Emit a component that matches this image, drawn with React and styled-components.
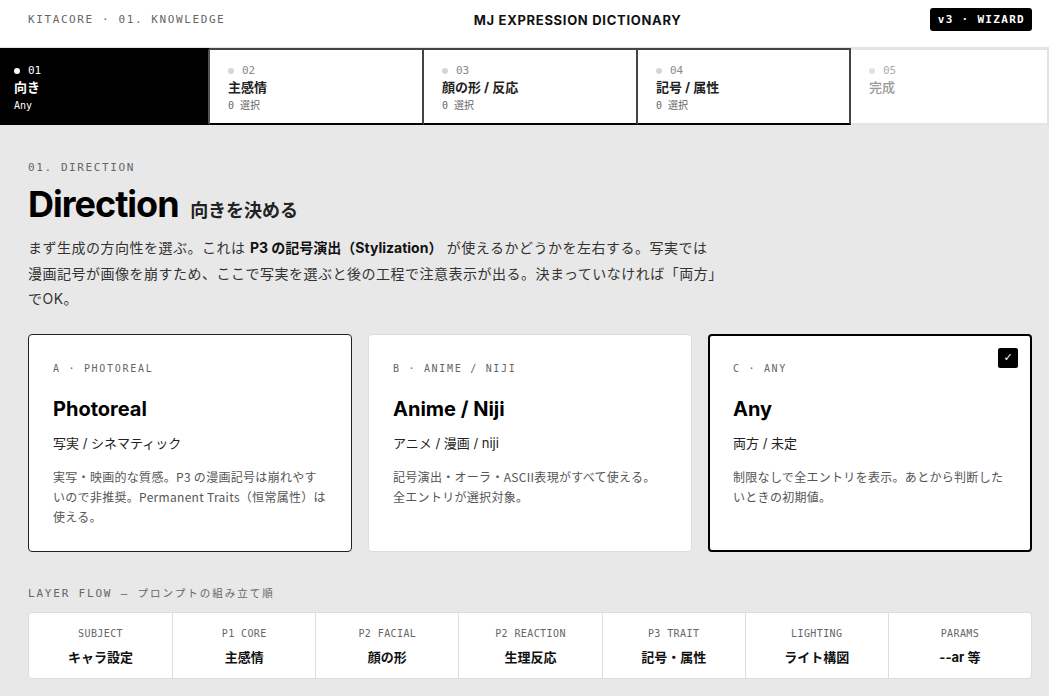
import styled, { createGlobalStyle } from "styled-components";

const GlobalStyle = createGlobalStyle`
  * { box-sizing: border-box; margin: 0; padding: 0; }
  body {
    background: #e8e8e8;
    font-family: Inter, "Noto Sans CJK JP", sans-serif;
    color: #111;
  }
`;

const MONO = `"DejaVu Sans Mono", "Noto Sans CJK JP", monospace`;
const TEXT = `"Noto Sans CJK JP", "Noto Sans", sans-serif`;

const steps = [
  { no: "01", title: "向き", sub: "Any", state: "active" },
  { no: "02", title: "主感情", sub: "0 選択", state: "open" },
  { no: "03", title: "顔の形 / 反応", sub: "0 選択", state: "open" },
  { no: "04", title: "記号 / 属性", sub: "0 選択", state: "open" },
  { no: "05", title: "完成", sub: "", state: "locked" },
];

const options = [
  {
    tag: "A · PHOTOREAL",
    name: "Photoreal",
    ja: "写実 / シネマティック",
    desc: "実写・映画的な質感。P3 の漫画記号は崩れやすいので非推奨。Permanent Traits（恒常属性）は使える。",
  },
  {
    tag: "B · ANIME / NIJI",
    name: "Anime / Niji",
    ja: "アニメ / 漫画 / niji",
    desc: "記号演出・オーラ・ASCII表現がすべて使える。全エントリが選択対象。",
  },
  {
    tag: "C · ANY",
    name: "Any",
    ja: "両方 / 未定",
    desc: "制限なしで全エントリを表示。あとから判断したいときの初期値。",
    selected: true,
  },
];

const layers = [
  ["SUBJECT", "キャラ設定"],
  ["P1 CORE", "主感情"],
  ["P2 FACIAL", "顔の形"],
  ["P2 REACTION", "生理反応"],
  ["P3 TRAIT", "記号・属性"],
  ["LIGHTING", "ライト構図"],
  ["PARAMS", "--ar 等"],
];

export default function App() {
  return (
    <>
      <GlobalStyle />
      <TopBar>
        <Crumb>KITACORE · 01. KNOWLEDGE</Crumb>
        <Brand>MJ EXPRESSION DICTIONARY</Brand>
        <Badge>v3 · WIZARD</Badge>
      </TopBar>

      <Steps>
        {steps.map((s) => (
          <Step key={s.no} $state={s.state}>
            <StepNo $state={s.state}>
              <Dot $state={s.state} />
              {s.no}
            </StepNo>
            <StepTitle $state={s.state}>{s.title}</StepTitle>
            {s.sub && <StepSub $state={s.state}>{s.sub}</StepSub>}
          </Step>
        ))}
      </Steps>

      <Main>
        <Eyebrow>01. DIRECTION</Eyebrow>
        <Heading>
          Direction <small>向きを決める</small>
        </Heading>
        <Lead>
          まず生成の方向性を選ぶ。これは <b>P3 の記号演出（Stylization）</b>{" "}
          が使えるかどうかを左右する。写実では漫画記号が画像を崩すため、ここで写実を選ぶと後の工程で注意表示が出る。決まっていなければ「両方」でOK。
        </Lead>

        <Cards>
          {options.map((o) => (
            <Card key={o.name} $selected={o.selected}>
              {o.selected && <Check>✓</Check>}
              <CardTag>{o.tag}</CardTag>
              <CardName>{o.name}</CardName>
              <CardJa>{o.ja}</CardJa>
              <CardDesc>{o.desc}</CardDesc>
            </Card>
          ))}
        </Cards>

        <FlowLabel>
          LAYER FLOW — <em>プロンプトの組み立て順</em>
        </FlowLabel>
        <Flow>
          {layers.map(([k, v]) => (
            <FlowCell key={k}>
              <span>{k}</span>
              <strong>{v}</strong>
            </FlowCell>
          ))}
        </Flow>
      </Main>
    </>
  );
}

const TopBar = styled.header`
  height: 48px;
  background: #fff;
  border-bottom: 1px solid #e2e2e2;
  display: flex;
  align-items: center;
  justify-content: space-between;
  padding: 0 17px 0 28px;
`;

const Crumb = styled.div`
  font-family: ${MONO};
  font-size: 11px;
  letter-spacing: 1.6px;
  color: #666;
  padding-bottom: 8px;
`;

const Brand = styled.div`
  font-size: 13px;
  font-weight: 700;
  letter-spacing: 0.7px;
  padding-bottom: 8px;
`;

const Badge = styled.div`
  background: #000;
  color: #fff;
  font-family: ${MONO};
  font-weight: 700;
  font-size: 11px;
  letter-spacing: 1.3px;
  padding: 5px 7px 5px 8px;
  border-radius: 3px;
  margin-bottom: 8px;
`;

const Steps = styled.nav`
  display: grid;
  grid-template-columns: 210px 214px 214px 213px 1fr;
  background: #fff;
`;

const Step = styled.div`
  height: 77px;
  padding: 14px 12px 14px 18px;
  border: 2px solid ${(p) => (p.$state === "locked" ? "#e4e4e4" : "#444")};
  border-bottom-color: ${(p) => (p.$state === "locked" ? "#e4e4e4" : "#000")};
  background: ${(p) => (p.$state === "active" ? "#000" : "#fff")};
  border-color: ${(p) => p.$state === "active" && "#000"};
  border-right-color: ${(p) => p.$state === "active" && "#555"};
  color: ${(p) => (p.$state === "active" ? "#fff" : "#222")};
  &:first-child { padding-left: 12px; }
  & + & { border-left: none; }
`;

const StepNo = styled.div`
  display: flex;
  align-items: center;
  gap: 8px;
  font-family: ${MONO};
  font-size: 11px;
  line-height: 14px;
  color: ${(p) => (p.$state === "active" ? "#fff" : "#888")};
  opacity: ${(p) => (p.$state === "locked" ? 0.7 : 1)};
`;

const Dot = styled.i`
  width: 6px;
  height: 6px;
  border-radius: 50%;
  background: ${(p) => (p.$state === "active" ? "#fff" : "#d6d6d6")};
`;

const StepTitle = styled.div`
  margin-top: 0;
  font-size: 13px;
  line-height: 18px;
  font-weight: ${(p) => (p.$state === "locked" ? 500 : 700)};
  color: ${(p) => (p.$state === "locked" ? "#999" : "inherit")};
`;

const StepSub = styled.div`
  margin-top: 3px;
  font-family: ${MONO};
  font-size: 10px;
  line-height: 14px;
  color: ${(p) => (p.$state === "active" ? "#fff" : "#666")};
`;

const Main = styled.main`
  padding: 36px 17px 0 28px;
`;

const Eyebrow = styled.div`
  font-family: ${MONO};
  font-size: 11px;
  letter-spacing: 1.6px;
  color: #666;
`;

const Heading = styled.h1`
  margin-top: 8px;
  font-size: 36px;
  line-height: 44px;
  font-weight: 700;
  letter-spacing: -1px;
  color: #000;
  small {
    font-size: 18px;
    font-weight: 700;
    letter-spacing: 0;
    margin-left: 4px;
    color: #222;
  }
`;

const Lead = styled.p`
  margin-top: 2px;
  max-width: 688px;
  font-family: Inter, "Noto Sans CJK JP", sans-serif;
  font-size: 14px;
  letter-spacing: 0.5px;
  line-height: 25.5px;
  color: #333;
  b { font-weight: 700; color: #111; letter-spacing: 0; }
`;

const Cards = styled.section`
  margin-top: 22px;
  display: grid;
  grid-template-columns: repeat(3, 1fr);
  gap: 16px;
`;

const Card = styled.div`
  position: relative;
  height: 218px;
  background: #fff;
  border: ${(p) => (p.$selected ? "2px solid #000" : "1px solid #222")};
  border-radius: 4px;
  padding: ${(p) => (p.$selected ? "27px 23px" : "28px 24px")};
  ${(p) => !p.$selected && "&:nth-child(2) { border-color: #ddd; }"}
`;

const Check = styled.span`
  position: absolute;
  top: 12px;
  right: 12px;
  width: 20px;
  height: 20px;
  border-radius: 2px;
  background: #000;
  color: #fff;
  font-family: "DejaVu Sans", sans-serif;
  font-size: 11px;
  display: grid;
  place-items: center;
`;

const CardTag = styled.div`
  font-family: ${MONO};
  font-size: 10px;
  letter-spacing: 1.7px;
  color: #666;
`;

const CardName = styled.h2`
  margin-top: 23px;
  font-size: 20px;
  font-weight: 700;
  color: #000;
`;

const CardJa = styled.div`
  margin-top: 12px;
  font-size: 13px;
  color: #222;
`;

const CardDesc = styled.p`
  margin-top: 15px;
  font-family: ${TEXT};
  font-size: 12px;
  letter-spacing: 0.3px;
  line-height: 20px;
  color: #555;
`;

const FlowLabel = styled.div`
  margin-top: 33px;
  font-family: ${MONO};
  font-size: 11px;
  letter-spacing: 1.8px;
  color: #666;
  em {
    font-style: normal;
    font-size: 10.5px;
    letter-spacing: 2px;
  }
`;

const Flow = styled.div`
  margin-top: 12px;
  display: grid;
  grid-template-columns: repeat(7, 1fr);
  background: #fff;
  border: 1px solid #ddd;
  border-radius: 4px;
`;

const FlowCell = styled.div`
  height: 65px;
  display: flex;
  flex-direction: column;
  align-items: center;
  justify-content: center;
  gap: 8px;
  padding-top: 4px;
  & + & { border-left: 1px solid #ddd; }
  span {
    font-family: ${MONO};
    font-size: 10px;
    letter-spacing: 0.4px;
    color: #666;
  }
  strong {
    font-size: 13px;
    font-weight: 700;
    color: #111;
  }
`;
